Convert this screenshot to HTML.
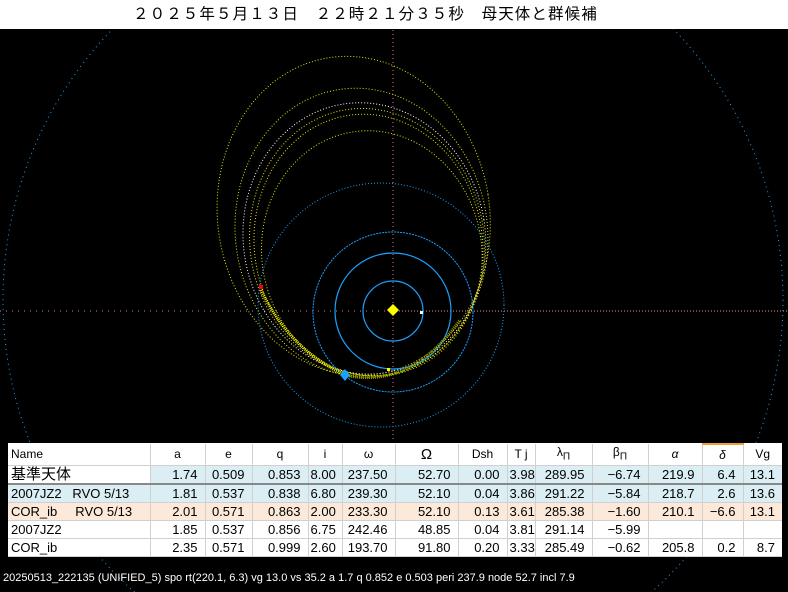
<!DOCTYPE html>
<html><head><meta charset="utf-8"><style>
html,body{margin:0;padding:0;overflow:hidden}
body{width:788px;height:592px;background:#000;position:relative;font-family:"Liberation Sans","Noto Sans CJK JP",sans-serif}
#title{position:absolute;left:0;top:0;width:788px;height:29px;background:#fff;color:#000;font-size:15.5px;line-height:32px;z-index:2}
#title span{position:absolute;left:133px;top:-1px;letter-spacing:1.1px;white-space:pre}
svg{position:absolute;left:0;top:0;z-index:1;display:block}
table{position:absolute;left:8px;top:443px;width:774px;border-collapse:collapse;background:#fff;font-size:13px;color:#000;table-layout:fixed;z-index:3}
td{height:17px;padding:0 7px 0 2px;border-left:1px solid #d0d0d0;border-bottom:1px solid #d0d0d0;text-align:right;white-space:nowrap;line-height:17px;overflow:hidden}
td:first-child{text-align:left;border-left:none;padding-left:3px}
tr.h td{height:20px;text-align:center;font-size:12px;padding:0}
tr.h td:first-child{text-align:left;padding-left:3px}
.b td{background:#daeef3}
.p td{background:#fde9d9}
tr.r1 td:first-child{background:#fff;font-size:15px}
tr.r1 td{border-bottom:2px solid #888}
#foot{position:absolute;left:3px;top:572px;color:#fff;font-size:11px;white-space:nowrap;z-index:3}
</style></head><body>
<div id="title"><span>２０２５年５月１３日　２２時２１分３５秒　母天体と群候補</span></div>
<svg width="788" height="592" viewBox="0 0 788 592">
<g fill="none" stroke-width="1">
<circle cx="393" cy="300" r="390" stroke="#1ba1ff" stroke-dasharray="1 4"/>
<line x1="393" y1="30" x2="393" y2="440" stroke="#e08080" stroke-dasharray="1 3"/>
<line x1="0" y1="311" x2="393" y2="311" stroke="#e08080" stroke-dasharray="1 5"/>
<line x1="393" y1="311" x2="788" y2="311" stroke="#f09090" stroke-dasharray="1 2"/>
<g transform="rotate(-9 360 230)" stroke="#e8e800" stroke-dasharray="1 2">
<ellipse cx="356" cy="215" rx="136" ry="160"/>
<ellipse cx="361" cy="233" rx="126" ry="145"/>
<ellipse cx="365" cy="243" rx="117" ry="134"/>
<ellipse cx="366" cy="246" rx="114" ry="131"/>
<ellipse cx="368" cy="255" rx="110" ry="123"/>
<ellipse cx="363" cy="239" rx="121" ry="136" stroke="#fff"/>
</g>
<ellipse cx="393" cy="311" rx="30" ry="30" stroke="#1ba1ff" stroke-width="1.2"/>
<ellipse cx="393" cy="311" rx="58" ry="58" stroke="#1ba1ff" stroke-width="1.2"/>
<circle cx="393" cy="312" r="80" stroke="#1ba1ff" stroke-dasharray="2 1"/>
<ellipse cx="381" cy="305" rx="123" ry="122" stroke="#1ba1ff" stroke-dasharray="1 2"/>
<path d="M261 290 Q290 350 345 375" stroke="#f0f000" stroke-width="3" stroke-dasharray="1 1"/>
<path d="M345 375 Q410 390 460 320" stroke="#a0a000" stroke-width="3" stroke-dasharray="1 1"/>
</g>
<polygon points="393,304 399,310 393,316 387,310" fill="#ff0"/>
<polygon points="345,369 350,375 345,381 340,375" fill="#1ba1ff"/>
<rect x="259" y="285" width="4" height="4" fill="#f00"/>
<rect x="420" y="311" width="3" height="3" fill="#fff"/>
<rect x="387" y="368" width="3" height="3" fill="#ff0"/>
</svg>
<table>
<colgroup><col style="width:142px"><col style="width:55px"><col style="width:47px"><col style="width:56px"><col style="width:34px"><col style="width:53px"><col style="width:63px"><col style="width:49px"><col style="width:28px"><col style="width:57px"><col style="width:56px"><col style="width:54px"><col style="width:41px"><col style="width:39px"></colgroup>
<tr class="h"><td>Name</td><td>a</td><td>e</td><td>q</td><td>i</td><td>ω</td><td style="font-size:15px">Ω</td><td>Dsh</td><td>T j</td><td>λ<sub>Π</sub></td><td>β<sub>Π</sub></td><td><i>α</i></td><td style="border-top:2px solid #f0a030"><i>δ</i></td><td>Vg</td></tr>
<tr class="b r1"><td>基準天体</td><td>1.74</td><td>0.509</td><td>0.853</td><td>8.00</td><td>237.50</td><td>52.70</td><td>0.00</td><td>3.98</td><td>289.95</td><td>−6.74</td><td>219.9</td><td>6.4</td><td>13.1</td></tr>
<tr class="b"><td>2007JZ2&nbsp;&nbsp;&nbsp;RVO 5/13</td><td>1.81</td><td>0.537</td><td>0.838</td><td>6.80</td><td>239.30</td><td>52.10</td><td>0.04</td><td>3.86</td><td>291.22</td><td>−5.84</td><td>218.7</td><td>2.6</td><td>13.6</td></tr>
<tr class="p"><td>COR_ib&nbsp;&nbsp;&nbsp;&nbsp;&nbsp;RVO 5/13</td><td>2.01</td><td>0.571</td><td>0.863</td><td>2.00</td><td>233.30</td><td>52.10</td><td>0.13</td><td>3.61</td><td>285.38</td><td>−1.60</td><td>210.1</td><td>−6.6</td><td>13.1</td></tr>
<tr><td>2007JZ2</td><td>1.85</td><td>0.537</td><td>0.856</td><td>6.75</td><td>242.46</td><td>48.85</td><td>0.04</td><td>3.81</td><td>291.14</td><td>−5.99</td><td></td><td></td><td></td></tr>
<tr><td>COR_ib</td><td>2.35</td><td>0.571</td><td>0.999</td><td>2.60</td><td>193.70</td><td>91.80</td><td>0.20</td><td>3.33</td><td>285.49</td><td>−0.62</td><td>205.8</td><td>0.2</td><td>8.7</td></tr>
</table>
<div id="foot">20250513_222135 (UNIFIED_5) spo rt(220.1, 6.3) vg 13.0 vs 35.2 a 1.7 q 0.852 e 0.503 peri 237.9 node 52.7 incl 7.9</div>
</body></html>
